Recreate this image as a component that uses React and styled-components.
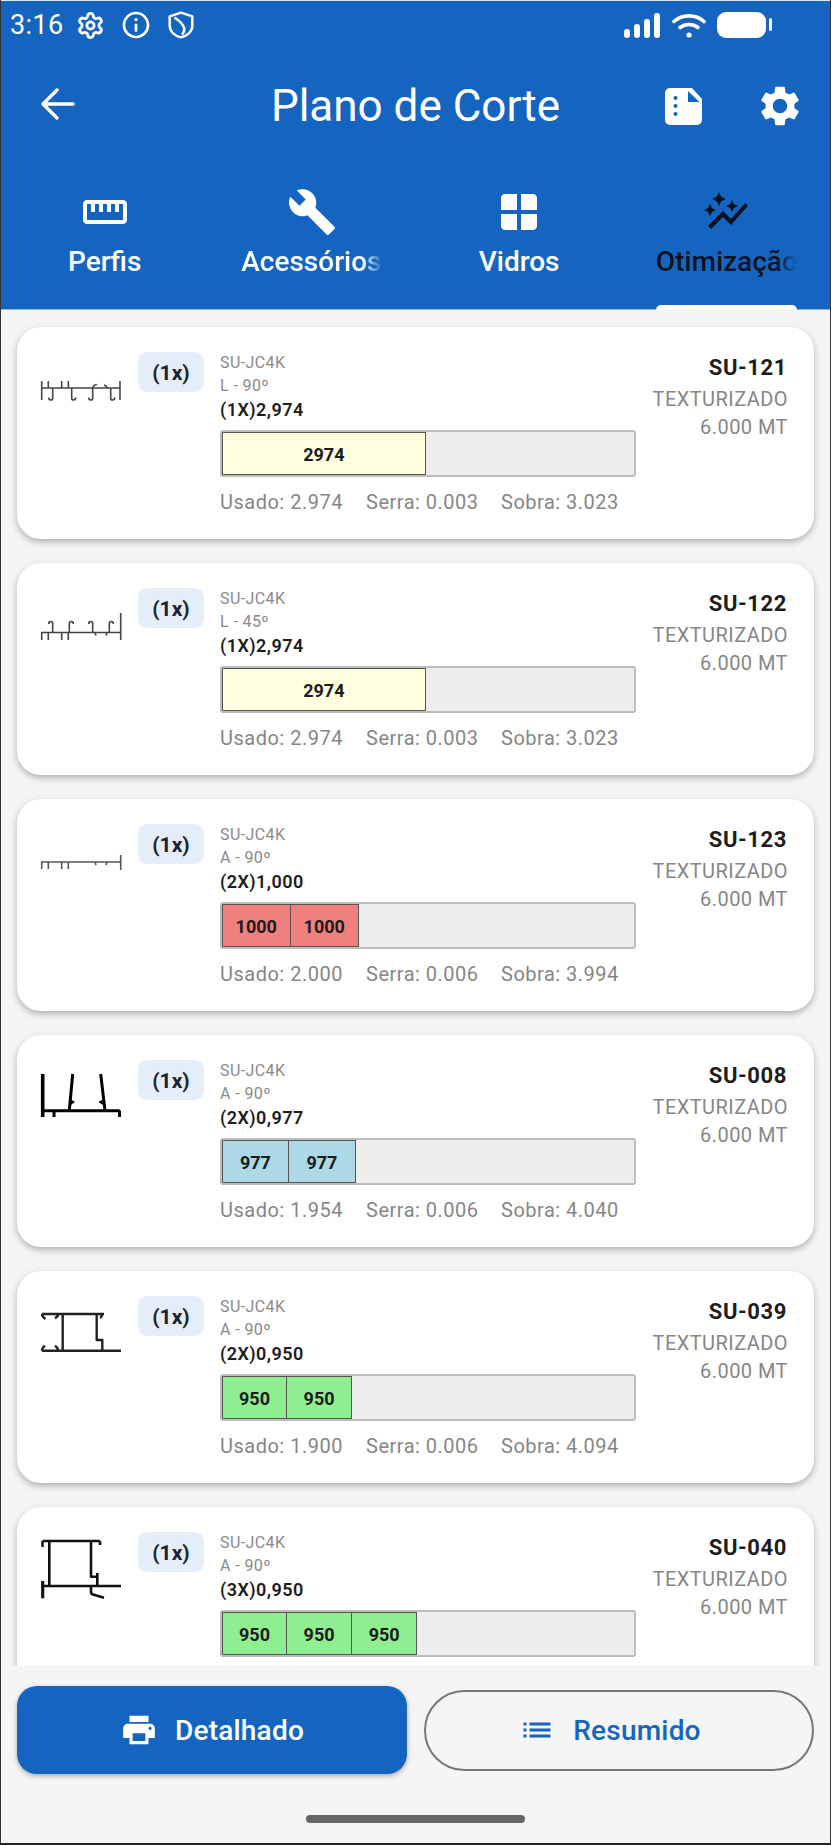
import React from "react";
import styled, { createGlobalStyle } from "styled-components";
import { MdSettings, MdBuild, MdStraighten, MdAutoGraph, MdPrint, MdList, MdWindow, MdInfoOutline } from "react-icons/md";
import { Settings } from "lucide-react";

const Global = createGlobalStyle`
  html, body { margin: 0; padding: 0; background: #f5f5f5; }
  * { box-sizing: border-box; }
  body { font-family: Roboto, "Liberation Sans", sans-serif; }
`;

const Screen = styled.div`
  width: 831px; height: 1845px; display: flex; flex-direction: column;
  overflow: hidden; background: #f5f5f5;
  border-left: 1px solid #333; border-right: 1px solid #333; border-bottom: 2px solid #222;
`;
const Header = styled.header`
  height: 310px; flex: none; background: #1565c0; color: #fff;
  border-top: 1px solid #dfe8f3; border-bottom: 1px solid #8fb2dc;
  display: flex; flex-direction: column;
`;
const StatusBar = styled.div`
  height: 48px; display: flex; align-items: center; padding: 0 57px 0 9px; color: #fff;
`;
const Time = styled.span`font-size: 27px; font-weight: 400; margin-right: 12px; letter-spacing: .4px;`;
const StatusIcons = styled.div`display: flex; align-items: center; gap: ${p => p.$gap}px;`;
const Spacer = styled.div`flex: 1;`;
const Toolbar = styled.div`
  height: 114px; padding: 0 26px 0 40px; display: grid; grid-template-columns: 1fr auto 1fr; align-items: center;
`;
const Title = styled.h1`margin: 0 0 0 -14px; font-size: 44px; font-weight: 400; line-height: 50px; text-align: center;`;
const Actions = styled.div`display: flex; align-items: center; justify-content: flex-end; gap: 54px;`;
const Tabs = styled.nav`flex: 1; display: grid; grid-template-columns: repeat(4, 1fr); position: relative;`;
const Tab = styled.div`
  position: relative; display: flex; flex-direction: column; align-items: center; padding: 25px 33px 0;
  color: ${p => (p.$active ? "#0b1220" : "#fff")}; min-width: 0;
`;
const TabIcon = styled.div`height: 48px; display: flex; align-items: center; justify-content: center;`;
const TabLabel = styled.div`
  margin-top: 9px; font-size: 28px; font-weight: 500; line-height: 34px; white-space: nowrap; width: 100%; text-align: center;
  overflow: hidden; display: flex; justify-content: ${p => (p.$clip ? "flex-start" : "center")};
  ${p => p.$clip && "mask-image: linear-gradient(90deg,#000 85%,transparent 100%); -webkit-mask-image: linear-gradient(90deg,#000 85%,transparent 100%);"}
`;
const Indicator = styled.div`
  position: absolute; left: 33px; right: 33px; bottom: -1px; height: 5px; background: #fff; border-radius: 6px 6px 0 0;
`;
const List = styled.main`flex: 1; min-height: 0; overflow: hidden; padding: 17px 16px 0; display: flex; flex-direction: column; gap: 24px;`;
const Card = styled.article`
  flex: none; height: 212px; background: #fff; border-radius: 24px; box-shadow: 0 3px 7px rgba(0,0,0,.28);
  display: flex; padding: 25px 26px 0 23px;
`;
const Drawing = styled.div`width: 82px; height: 70px; flex: none; margin-right: 16px;`;
const Badge = styled.div`
  width: 66px; height: 40px; flex: none; border-radius: 9px; background: #e5eef8; color: #1c2430; margin-right: 16px;
  display: flex; align-items: center; justify-content: center; font-size: 21px; font-weight: 700; padding-top: 1px;
`;
const Middle = styled.div`width: 416px; flex: none; margin-top: -1px;`;
const Code = styled.div`font-size: 16px; line-height: ${p => p.$lh}px; color: #8a8a8a; letter-spacing: .4px;`;
const Cut = styled.div`font-size: 18px; line-height: 24px; font-weight: 600; color: #1d1d1d; letter-spacing: .45px; padding-top: 1px; margin-bottom: -1px;`;
const Track = styled.div`
  margin-top: 9px; height: 47px; background: #eee; border: 2px solid #bdbdbd; border-radius: 3px; display: flex; overflow: hidden;
`;
const Segment = styled.div`
  height: 100%; flex: none; width: ${p => (p.$value / 6000) * 411}px; background: ${p => p.$color};
  border: 1px solid #555; border-left-width: ${p => (p.$first ? 1 : 0)}px; padding-top: 1px;
  display: flex; align-items: center; justify-content: center; font-size: 18px; font-weight: 700; color: #1b1b1b;
`;
const Stats = styled.div`margin-top: 13px; display: flex; font-size: 20px; line-height: 24px; color: #868686; letter-spacing: .5px;`;
const Stat = styled.span`width: ${p => p.$w}px; flex: none; white-space: nowrap;`;
const Side = styled.div`flex: 1; text-align: right; margin-top: 2px;`;
const Ref = styled.div`font-size: 22px; font-weight: 700; line-height: 28px; color: #1d1d1d; margin: 0 1px 3px 0; letter-spacing: .6px;`;
const Spec = styled.div`font-size: 20px; line-height: 28px; color: #868686; letter-spacing: .45px;`;
const Footer = styled.footer`flex: none; height: 177px; background: #f5f5f5; display: flex; flex-direction: column; align-items: center; position: relative;`;
const Buttons = styled.div`width: 100%; display: grid; grid-template-columns: 390px 390px; justify-content: space-between; align-items: center; padding: 20px 16px 0;`;
const Solid = styled.button`
  height: 88px; border: 0; border-radius: 20px; background: #1565c0; color: #fff; box-shadow: 0 2px 5px rgba(0,0,0,.3);
  display: flex; align-items: center; justify-content: center; gap: 17px; font: 500 28px Roboto, sans-serif; letter-spacing: .2px;
`;
const Outline = styled.button`
  height: 81px; border: 2px solid #777; border-radius: 41px; background: transparent; color: #1565c0; padding: 0 18px 0 0;
  display: flex; align-items: center; justify-content: center; gap: 18px; font: 500 28px Roboto, sans-serif; letter-spacing: .2px;
`;
const HomeBar = styled.div`width: 219px; height: 8px; border-radius: 4px; background: #666; margin-top: 41px;`;

const Shield = () => (
  <svg width="28" height="28" viewBox="0 0 26 26" fill="none" stroke="#fff" strokeWidth="2.3" strokeLinejoin="round">
    <path d="M13 1.5 23.5 5v8.5c0 5.5-4.5 9.5-10.5 11C7 23 2.5 19 2.5 13.5V5z" />
    <path d="M7 6c3 2 8 6 9 10 .4 2-.5 4-2 6" />
  </svg>
);
const Signal = () => (
  <svg width="37" height="25" viewBox="0 0 37 25" fill="#fff">
    <rect x="0" y="16" width="6" height="9" rx="3" /><rect x="10" y="11" width="6" height="14" rx="3" />
    <rect x="20" y="6" width="6" height="19" rx="3" /><rect x="30" y="0" width="6" height="25" rx="3" />
  </svg>
);
const Wifi = () => (
  <svg width="34" height="25" viewBox="0 0 34 25" fill="none" stroke="#fff" strokeWidth="3.6" strokeLinecap="round">
    <path d="M2 8.5C10 1 24 1 32 8.5" /><path d="M8 14.5c5-4 13-4 18 0" />
    <circle cx="17" cy="22" r="2.6" fill="#fff" stroke="none" />
  </svg>
);
const Battery = () => (
  <svg width="56" height="26" viewBox="0 0 56 26" fill="#fff">
    <rect x="0" y="0" width="49" height="26" rx="9" /><rect x="52" y="6" width="3" height="13" rx="1.5" />
  </svg>
);
const Back = () => (
  <svg width="34" height="32" viewBox="0 0 34 32" fill="none" stroke="#fff" strokeWidth="3.4" strokeLinecap="round" strokeLinejoin="round">
    <path d="M32 16H3" /><path d="M16 2 2 16l14 14" />
  </svg>
);
const FileIcon = () => (
  <svg width="37" height="37" viewBox="0 0 37 37">
    <path fill="#fff" d="M5 0h22l10 11v21a5 5 0 0 1-5 5H5a5 5 0 0 1-5-5V5a5 5 0 0 1 5-5z" />
    <path fill="#1565c0" d="M23 3v11h11.5z" />
    <circle cx="10.5" cy="10" r="2" fill="#1565c0" /><circle cx="10.5" cy="18" r="2" fill="#1565c0" /><circle cx="10.5" cy="26" r="2" fill="#1565c0" />
  </svg>
);

const Profile = ({ children, w = 1.6, color = "#444" }) => (
  <svg width="82" height="70" viewBox="0 0 82 70" fill="none" stroke={color} strokeWidth={w} strokeLinejoin="round">{children}</svg>
);
const drawings = {
  a: (
    <Profile>
      <path d="M1.7 29V48M80 29V48M1 36H80M8.3 29v7M21.7 29v7M28.3 29v7" />
      <path d="M12.7 36V46.5q0 1.5-2 1.5t-2-2.5M31.7 36V46.5q0 1.5 2 1.5t2-2.5M52.7 36V46.5q0 1.500-2 1.500t-2-2.500M70.700 36V46.500q0 1.500 2 1.500t2-2.500" />
      <path d="M53 36q0-3 4-3.500M67 36q0-2-3-3" />
    </Profile>
  ),
  b: (
    <Profile>
      <path d="M1 44.500H81M80.700 25V52M1.700 44.500V52M8.300 44.500V52M21.700 44.500V52M28.300 44.500V52" />
      <path d="M12.700 44V35.500q0-2-2-2t-2 2.500M29.300 44V35.500q0-2 2-2t2 2.500M52.700 44V35.500q0-2-2-2t-2 2.500M69.300 44V35.500q0-2 2-2t2 2.500" />
      <path d="M55 44.500l1 3M67 44.500l-1 3" />
    </Profile>
  ),
  c: (
    <Profile color="#555">
      <path d="M1 38H81M80.700 31V46M1.700 38V45M8.300 38V45M21.700 38V45M28.300 38V45M55 38l1 3M67 38l-1 3" />
    </Profile>
  ),
  d: (
    <Profile color="#000" w={3}>
      <path d="M2.700 14V57" strokeWidth="3.600" />
      <path d="M2.700 50.700H78q1.500 0 1.500 1.500V57M14 50.700V57" />
      <path d="M32.700 14 29.300 50.700M60.700 14 65 50.700" />
      <path d="M30.500 41l3 1-3 2M63 41l-3 1 3 2" strokeWidth="2" />
    </Profile>
  ),
  e: (
    <Profile color="#222" w={2.4}>
      <path d="M2 18H64M2 54.700H81M22.700 18V54.700M56.700 18V44H62.300V54.700" />
      <path d="M2 18q0 3 3.500 5M18 18q0 3-3 4M62 18q0 3-2 4M2 54.700q0-3 3-5M18 54.700q0-3-3-5" />
    </Profile>
  ),
  f: (
    <Profile color="#111" w={2.6}>
      <path d="M2.700 9H60M2.700 9q-.7 2 0 6M60 9v4M9.300 9V54M51 9V44.700H57.300M57.300 41V54M2.700 54H81" />
      <path d="M2.700 49V66.300" strokeWidth="3.200" />
      <path d="M51 54V60q0 2 2 2.500L64 65.700" />
    </Profile>
  ),
};

const rows = [
  { d: "a", code: "L - 90º", cut: "(1X)2,974", seg: [2974], color: "#ffffe0", used: "2.974", saw: "0.003", left: "3.023", ref: "SU-121" },
  { d: "b", code: "L - 45º", cut: "(1X)2,974", seg: [2974], color: "#ffffe0", used: "2.974", saw: "0.003", left: "3.023", ref: "SU-122" },
  { d: "c", code: "A - 90º", cut: "(2X)1,000", seg: [1000, 1000], color: "#f08080", used: "2.000", saw: "0.006", left: "3.994", ref: "SU-123" },
  { d: "d", code: "A - 90º", cut: "(2X)0,977", seg: [977, 977], color: "#add8e6", used: "1.954", saw: "0.006", left: "4.040", ref: "SU-008" },
  { d: "e", code: "A - 90º", cut: "(2X)0,950", seg: [950, 950], color: "#90ee90", used: "1.900", saw: "0.006", left: "4.094", ref: "SU-039" },
  { d: "f", code: "A - 90º", cut: "(3X)0,950", seg: [950, 950, 950], color: "#90ee90", used: "", saw: "", left: "", ref: "SU-040" },
];
const tabs = [
  { label: "Perfis", icon: <MdStraighten size={48} /> },
  { label: "Acessórios", icon: <MdBuild size={50} />, clip: true },
  { label: "Vidros", icon: <MdWindow size={48} /> },
  { label: "Otimização", icon: <MdAutoGraph size={48} />, clip: true, active: true },
];

export default function App() {
  return (
    <Screen>
      <Global />
      <Header>
        <StatusBar>
          <Time>3:16</Time>
          <StatusIcons $gap={15}>
            <Settings size={29} strokeWidth={2.3} />
            <MdInfoOutline size={32} />
            <Shield />
          </StatusIcons>
          <Spacer />
          <StatusIcons $gap={11}>
            <Signal /><Wifi /><Battery />
          </StatusIcons>
        </StatusBar>
        <Toolbar>
          <div><Back /></div>
          <Title>Plano de Corte</Title>
          <Actions>
            <FileIcon />
            <MdSettings size={48} />
          </Actions>
        </Toolbar>
        <Tabs>
          {tabs.map(t => (
            <Tab key={t.label} $active={t.active}>
              <TabIcon>{t.icon}</TabIcon>
              <TabLabel $clip={t.clip}>{t.label}</TabLabel>
              {t.active && <Indicator />}
            </Tab>
          ))}
        </Tabs>
      </Header>
      <List>
        {rows.map(r => (
          <Card key={r.ref}>
            <Drawing>{drawings[r.d]}</Drawing>
            <Badge>(1x)</Badge>
            <Middle>
              <Code $lh={24}>SU-JC4K</Code>
              <Code $lh={22}>{r.code}</Code>
              <Cut>{r.cut}</Cut>
              <Track>
                {r.seg.map((v, i) => (
                  <Segment key={i} $value={v} $color={r.color} $first={i === 0}>{v}</Segment>
                ))}
              </Track>
              {r.used && (
                <Stats>
                  <Stat $w={146}>Usado: {r.used}</Stat>
                  <Stat $w={135}>Serra: {r.saw}</Stat>
                  <Stat $w={120}>Sobra: {r.left}</Stat>
                </Stats>
              )}
            </Middle>
            <Side>
              <Ref>{r.ref}</Ref>
              <Spec>TEXTURIZADO</Spec>
              <Spec>6.000 MT</Spec>
            </Side>
          </Card>
        ))}
      </List>
      <Footer>
        <Buttons>
          <Solid><MdPrint size={38} />Detalhado</Solid>
          <Outline><MdList size={36} />Resumido</Outline>
        </Buttons>
        <HomeBar />
      </Footer>
    </Screen>
  );
}
